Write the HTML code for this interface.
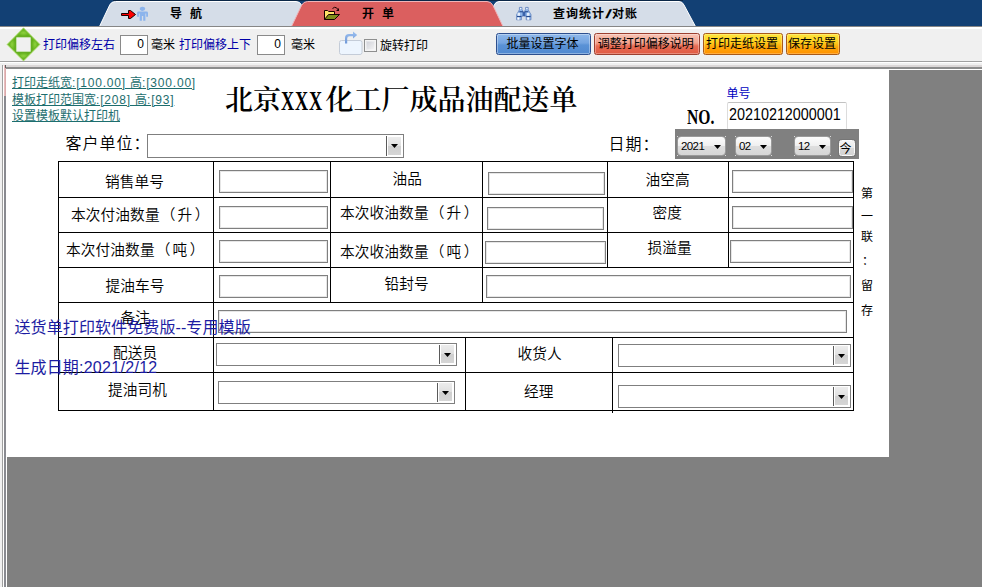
<!DOCTYPE html>
<html lang="zh-CN">
<head>
<meta charset="utf-8">
<title>送货单打印</title>
<style>
html,body{margin:0;padding:0;}
body{width:982px;height:587px;overflow:hidden;position:relative;background:#f0f0f0;
  font-family:"Liberation Sans","Noto Sans CJK SC",sans-serif;font-size:12px;color:#000;}
.abs{position:absolute;}
.t12{position:absolute;font-size:12px;line-height:14px;height:14px;white-space:nowrap;}
/* tab bar */
#tabbar{position:absolute;left:0;top:0;width:982px;height:26px;background:#124074;}
#tabsvg{position:absolute;left:0;top:0;}
.tabtxt{position:absolute;word-spacing:2.7px;letter-spacing:1px;font-weight:bold;font-size:12px;line-height:14px;white-space:nowrap;color:#000;}
/* toolbar */
#toolbar{position:absolute;left:0;top:26px;width:982px;height:35px;background:#f0f0f0;border-top:1px solid #868686;box-sizing:border-box;}
#toolbar:before{content:"";position:absolute;left:0;top:0;width:100%;height:2px;background:#fff;}
.blue{color:#0000a8;}
.tin{position:absolute;box-sizing:border-box;border:1px solid #8a8a8a;background:#fff;font-size:12px;line-height:17px;text-align:right;padding-right:3px;}
.btn{position:absolute;top:33px;height:22px;box-sizing:border-box;border:1px solid #333;border-radius:2.5px;font-size:12px;line-height:20.6px;text-align:center;text-indent:-2px;white-space:nowrap;}
/* paper */
#work{position:absolute;left:7px;top:70px;width:975px;height:517px;background:#808080;}
#paper{position:absolute;left:6px;top:69px;width:883px;height:388px;background:#fff;}
.a{letter-spacing:.8px;}
.link{position:absolute;color:#1d6e6e;text-decoration:underline;font-size:12px;line-height:14px;white-space:nowrap;}
.rp{position:relative;left:2.5px;}
.lp{margin-right:3px;position:relative;left:1px;}
.cl{position:relative;left:0px;}
.lbl{position:absolute;letter-spacing:.12px;font-size:14.67px;line-height:17px;white-space:nowrap;font-weight:350;text-align:center;}
.l16{position:absolute;font-size:16px;line-height:18px;white-space:nowrap;font-weight:350;letter-spacing:1px;}
.inp{position:absolute;box-sizing:border-box;height:23px;border:1px solid #7f7f7f;background:#fff;box-shadow:inset 0 0 0 1px #e6e6e6;}
.cmb{position:absolute;box-sizing:border-box;height:24px;border:1px solid #7f7f7f;background:#fff;}
.cmb i{position:absolute;right:16px;top:1px;bottom:1px;width:1px;background:#5a5a5a;}
.cmb b{position:absolute;right:2px;top:2px;bottom:2px;width:13px;background:linear-gradient(#ececec,#e0e0e0 50%,#cfcfcf 51%,#d6d6d6);}
.cmb b:after{content:"";position:absolute;left:3px;top:7px;width:7px;height:4px;background:#000;clip-path:polygon(0 0,100% 0,50% 100%);}
.cmb.s{height:23px;}
.cmb.s b{top:1px;}
.cmb.s b:after{top:8px;}
.hl{position:absolute;height:1px;background:#000;}
.vl{position:absolute;width:1px;background:#000;}
.wm{position:absolute;letter-spacing:.1px;color:#1c1ca2;font-size:16px;line-height:18px;white-space:nowrap;}
.dsel{position:absolute;top:136px;height:20px;box-sizing:border-box;border:1px solid #9a9a9a;border-radius:4px;background:linear-gradient(#fcfcfc,#f0f0f0 48%,#dedede 52%,#d6d6d6);font-size:11.5px;line-height:19px;padding-left:3px;letter-spacing:-.6px;}
.dsel:before{content:"";position:absolute;left:-1px;top:-1px;right:-1px;bottom:-1px;background:linear-gradient(#dcdcdc,#dcdcdc) 0 0/1px 1px no-repeat,linear-gradient(#dcdcdc,#dcdcdc) 100% 0/1px 1px no-repeat,linear-gradient(#dcdcdc,#dcdcdc) 0 100%/1px 1px no-repeat,linear-gradient(#dcdcdc,#dcdcdc) 100% 100%/1px 1px no-repeat;}
.dsel:after{content:"";position:absolute;right:4px;top:8px;width:7px;height:4px;background:#000;clip-path:polygon(0 0,100% 0,50% 100%);}
</style>
</head>
<body>
<!-- TABBAR -->
<div id="tabbar"></div>
<svg id="tabsvg" width="982" height="27" viewBox="0 0 982 27">
  <rect x="113" y="0" width="570" height="1" fill="#0b2747"/>
  <!-- tab 1 -->
  <path d="M99.5,26.5 L109.8,4.8 Q111.5,1.5 115.5,1.5 L296,1.5 Q300,1.5 301.5,5 L311,26.5 Z" fill="#d5dde8" stroke="#ffffff" stroke-width="1"/>
  <!-- tab 3 -->
  <path d="M484,26.5 L494,5.5 Q495.5,1.5 499,1.5 L679,1.5 Q682.5,1.5 684,5 L695.5,26.5 Z" fill="#d5dde8" stroke="#ffffff" stroke-width="1"/>
  <!-- tab 2 active -->
  <path d="M291.5,26.5 L301.5,5.5 Q303.5,1.5 307.5,1.5 L487,1.5 Q491,1.5 493,5.5 L503,26.5 Z" fill="#db5f5f" stroke="#f0b4b8" stroke-width="1"/>
  <rect x="0" y="26" width="982" height="1" fill="#868686"/>
  <rect x="292" y="26" width="211" height="1" fill="#b48a8a"/>
  <!-- arrow + person icon -->
  <path d="M121.5,13.5 H128.5 V10.5 H130.5 L135.5,14.5 L130.5,18.5 H128.5 V15.5 H121.5 Z" fill="#ff0000" stroke="#1a0000" stroke-width="1" stroke-linejoin="miter"/>
  <g fill="#8cb4ec">
    <ellipse cx="142.5" cy="8.8" rx="2.7" ry="2.1"/>
    <path d="M138.5,11.6 H146.5 Q148,11.6 148,13 V16.7 H146.2 V13.6 H145.4 V20.8 H143.2 V16 H141.9 V20.8 H139.7 V13.6 H138.9 V16.7 H137.1 V13 Q137.1,11.6 138.5,11.6 Z"/>
  </g>
  <!-- folder icon -->
  <g>
    <path d="M324.5,19.5 V10.5 H327.5 L328.5,11.5 H334.5 V14.5" fill="#ffe878" stroke="#1a0000" stroke-width="1"/>
    <path d="M325,11 h2.5 l1,1 h5.5 v3 h-6.5 l-2.5,4 Z" fill="#ffe469"/>
    <path d="M324.5,19.5 L328.5,14.5 H339.5 L334.5,19.5 Z" fill="#7f8c1c" stroke="#1a0000" stroke-width="1" stroke-linejoin="miter"/>
    <path d="M332.5,8.5 Q334.5,6.5 336.5,7.8 L338,9.6" fill="none" stroke="#1a0000" stroke-width="1"/>
    <path d="M339,8 V11 H336 Z" fill="#1a0000"/>
  </g>
  <!-- binoculars icon -->
  <g>
    <path d="M519.4,7.4 h2.6 v2.4 l1.4,1.8 v4.6 h-2 v3.6 h-4.8 v-5.2 l2.8,-4.8 Z" fill="#8fb6ea" stroke="#6483bd" stroke-width="0.8"/>
    <path d="M525.6,7.4 h2.6 v2.4 l2.8,4.8 v5.2 h-4.8 v-3.6 h-2 v-4.6 l1.4,-1.8 Z" fill="#8fb6ea" stroke="#6483bd" stroke-width="0.8"/>
    <rect x="522.6" y="12" width="2.8" height="4" fill="#3b63aa"/>
    <rect x="517" y="15.9" width="4.4" height="1.2" fill="#264a8e"/>
    <rect x="526.2" y="15.9" width="4.4" height="1.2" fill="#264a8e"/>
    <rect x="519.4" y="11.2" width="3.6" height="1.1" fill="#264a8e"/>
    <rect x="524.6" y="11.2" width="3.6" height="1.1" fill="#264a8e"/>
    <rect x="517.4" y="17.4" width="2" height="2.3" fill="#ffffff"/>
    <rect x="527.2" y="17.4" width="2" height="2.3" fill="#ffffff"/>
    <rect x="517.6" y="12.8" width="2.4" height="3" fill="#e4eefb"/>
    <rect x="527" y="12.8" width="2.4" height="3" fill="#e4eefb"/>
    <rect x="520.1" y="8" width="1.2" height="1.2" fill="#ffffff"/>
    <rect x="526.3" y="8" width="1.2" height="1.2" fill="#ffffff"/>
  </g>
</svg>
<div class="tabtxt" style="left:170px;top:7px;">导 航</div>
<div class="tabtxt" style="left:362px;top:7px;">开 单</div>
<div class="tabtxt" style="left:553px;top:7px;">查询统计<span style="display:inline-block;width:7px;text-align:center;letter-spacing:0;transform:scaleX(1.7) skewX(-6deg);">/</span>对账</div>
<!-- TOOLBAR -->
<div id="toolbar"></div>
<!-- diamond icon -->
<svg class="abs" style="left:6px;top:27px" width="36" height="36" viewBox="6 27 36 36">
  <defs>
    <radialGradient id="gd" cx="0.5" cy="0.5" r="0.5"><stop offset="0" stop-color="#8ed23e"/><stop offset="1" stop-color="#64b01c"/></radialGradient>
  </defs>
  <path d="M23.5,27.8 L40,44.4 L23.5,61 L7,44.4 Z" fill="#70ba26" stroke="#b6e27c" stroke-width="0.8"/>
  <path d="M23.5,29.6 L29.8,36 H17.2 Z" fill="url(#gd)"/>
  <path d="M23.5,59.2 L29.8,52.8 H17.2 Z" fill="url(#gd)"/>
  <path d="M8.8,44.4 L15.2,38 V50.8 Z" fill="url(#gd)"/>
  <path d="M38.2,44.4 L31.8,38 V50.8 Z" fill="url(#gd)"/>
  <rect x="15.6" y="36.6" width="15.8" height="15.8" fill="#58a01e"/>
  <rect x="16.3" y="37.3" width="14.4" height="14.4" fill="#f4faea"/>
  <rect x="17" y="38" width="13" height="13" fill="#f0f0f0"/>
</svg>
<div class="t12 blue" style="left:43px;top:38px;">打印偏移左右</div>
<div class="tin" style="left:120px;top:35px;width:28px;height:20px;">0</div>
<div class="t12" style="left:151px;top:38px;">毫米</div>
<div class="t12 blue" style="left:179px;top:38px;">打印偏移上下</div>
<div class="tin" style="left:257px;top:35px;width:28px;height:20px;">0</div>
<div class="t12" style="left:291px;top:38px;">毫米</div>
<!-- rotate icon -->
<svg class="abs" style="left:337px;top:29px" width="28" height="28" viewBox="337 29 28 28">
  <defs><linearGradient id="ga" x1="0" y1="0" x2="0" y2="1"><stop offset="0" stop-color="#9cc0f0"/><stop offset="1" stop-color="#6f98d8"/></linearGradient></defs>
  <rect x="339.5" y="40.5" width="22.5" height="14" rx="2" ry="2" fill="#edf5fe" stroke="#c4ccd8" stroke-width="1"/>
  <path d="M345,43.5 V38 Q345,34 349,34 H353 V31.5 L357.2,35 L353,38.6 V36.2 H349.5 Q347.2,36.2 347.2,38.5 V43.5 Z" fill="url(#ga)"/>
</svg>
<!-- checkbox -->
<div class="abs" style="left:364px;top:39px;width:13px;height:13px;box-sizing:border-box;border:1px solid #8e8f8f;background:#f4f4f4;">
  <div style="position:absolute;left:1px;top:1px;width:9px;height:9px;background:linear-gradient(135deg,#cfd1d8,#f4f4f4);box-shadow:inset 0 0 0 1px rgba(255,255,255,.35);"></div>
</div>
<div class="t12" style="left:380px;top:39px;">旋转打印</div>
<!-- buttons -->
<div class="btn" style="left:496px;width:95px;border-color:#2d4f8e;background:linear-gradient(#8fb8ea,#74a4e0 45%,#5a92d6 55%,#5189d0);box-shadow:inset 0 0 0 1px rgba(255,255,255,.35);">批量设置字体</div>
<div class="btn" style="left:594px;width:105.5px;border-color:#9c4030;background:linear-gradient(#f8c4b4,#f2a28e 45%,#e86c54 60%,#e05a42);box-shadow:inset 0 0 0 1px rgba(255,255,255,.3);">调整打印偏移说明</div>
<div class="btn" style="left:703px;width:80px;border-color:#a85a18;background:linear-gradient(#ffe63c,#ffd020 40%,#ffa808 65%,#ff9000);box-shadow:inset 0 0 0 1px rgba(255,255,255,.25);">打印走纸设置</div>
<div class="btn" style="left:786px;width:54px;border-color:#a85a18;background:linear-gradient(#ffe63c,#ffd020 40%,#ffa808 65%,#ff9000);box-shadow:inset 0 0 0 1px rgba(255,255,255,.25);">保存设置</div>
<!-- separators under toolbar -->
<div class="abs" style="left:0;top:61px;width:982px;height:1px;background:#a0a0a0;"></div>
<div class="abs" style="left:0;top:62px;width:982px;height:1px;background:#ffffff;"></div>
<div class="abs" style="left:0;top:63px;width:982px;height:2px;background:#f0f0f0;"></div>
<div class="abs" style="left:6px;top:65px;width:976px;height:2px;background:#dcd8d8;"></div>
<div class="abs" style="left:6px;top:67px;width:976px;height:2px;background:#8c8c8c;"></div>
<div class="abs" style="left:6px;top:69px;width:976px;height:1px;background:#ffffff;"></div>
<!-- left edge -->
<div class="abs" style="left:2px;top:65px;width:1px;height:522px;background:#a0a0a0;"></div>
<div class="abs" style="left:3px;top:66px;width:1px;height:521px;background:#ffffff;"></div>
<div class="abs" style="left:4px;top:65px;width:2px;height:522px;background:#898a90;"></div>
<div class="abs" style="left:6px;top:69px;width:1px;height:518px;background:#ffffff;"></div>
<div class="abs" style="left:4px;top:65px;width:2px;height:31px;background:linear-gradient(90deg,#ecc8c8,#d6a0a2);"></div>
<div class="abs" style="left:5px;top:65px;width:1px;height:3px;background:#5e5e5e;"></div>
<!-- WORK -->
<div id="work"></div>
<div id="paper"></div>
<div class="link" style="left:12px;top:76px;">打印走纸宽<span class="a">:[100.00] </span>高<span class="a">:[300.00]</span></div>
<div class="link" style="left:12px;top:92.5px;">模板打印范围宽<span class="a">:[208] </span>高<span class="a">:[93]</span></div>
<div class="link" style="left:12px;top:109px;">设置模板默认打印机</div>
<div class="abs" id="title" style="left:225px;top:82.5px;font:600 28px/36px 'Liberation Serif','Noto Serif CJK SC',serif;white-space:nowrap;">北京<span style="display:inline-block;width:44.5px;"><span style="display:inline-block;transform:scaleX(.65);transform-origin:0 50%;font-weight:bold;letter-spacing:1.3px;margin-left:-.2px;">XXX</span></span>化工厂成品油配送单</div>
<div class="l16" style="left:65.5px;top:135px;">客户单位<span class="cl">：</span></div>
<div class="cmb" style="left:147px;top:134px;width:257px;"><i></i><b></b></div>
<div class="t12" style="left:726.5px;top:87px;color:#0000c0;">单号</div>
<div class="abs" style="left:687px;top:105px;font:bold 20px/24px 'Liberation Serif',serif;white-space:nowrap;transform:scaleX(.78);transform-origin:0 50%;">NO.</div>
<div class="abs" style="left:727px;top:102px;width:120px;height:28px;box-sizing:border-box;border:1px solid #dcdcdc;border-top-color:#c2c2c2;border-radius:2px;background:#fff;font-size:16px;line-height:24px;padding-left:1px;"><span style="display:inline-block;transform:scaleX(.897);transform-origin:0 50%;">20210212000001</span></div>
<div class="l16" style="left:608.5px;top:136px;">日期<span class="cl">：</span></div>
<div class="abs" style="left:675px;top:129px;width:184px;height:30px;background:#808080;"></div>
<div class="dsel" style="left:677px;width:49px;">2021</div>
<div class="dsel" style="left:735px;width:37px;">02</div>
<div class="dsel" style="left:794px;width:37px;">12</div>
<div class="abs" style="left:839px;top:140px;width:16px;height:16px;box-sizing:border-box;border:1px solid #fafafa;border-radius:2.5px;box-shadow:0 0 0 1px #767676;background:linear-gradient(#f4f4f4,#eaeaea 48%,#dadada 52%,#d4d4d4);font-size:12px;line-height:14px;text-align:center;text-indent:-1px;overflow:visible;white-space:nowrap;"><span style="position:relative;left:-1px;top:1px;">今</span></div>
<div class="hl" style="left:58px;top:161px;width:796px;"></div>
<div class="hl" style="left:58px;top:197px;width:796px;"></div>
<div class="hl" style="left:58px;top:232px;width:796px;"></div>
<div class="hl" style="left:58px;top:267px;width:796px;"></div>
<div class="hl" style="left:58px;top:302px;width:796px;"></div>
<div class="hl" style="left:58px;top:337px;width:796px;"></div>
<div class="hl" style="left:58px;top:372px;width:796px;"></div>
<div class="hl" style="left:58px;top:410px;width:796px;"></div>
<div class="vl" style="left:58px;top:161px;height:250px;"></div>
<div class="vl" style="left:213px;top:161px;height:250px;"></div>
<div class="vl" style="left:853px;top:161px;height:250px;"></div>
<div class="vl" style="left:330px;top:161px;height:142px;"></div>
<div class="vl" style="left:482px;top:161px;height:142px;"></div>
<div class="vl" style="left:607px;top:161px;height:107px;"></div>
<div class="vl" style="left:728px;top:161px;height:107px;"></div>
<div class="vl" style="left:465px;top:337px;height:74px;"></div>
<div class="vl" style="left:612px;top:337px;height:76px;"></div>
<div class="lbl" style="left:105px;top:174px;">销售单号</div>
<div class="lbl" style="left:71px;top:206.5px;">本次付油数量<span class="lp">（</span>升<span class="rp">）</span></div>
<div class="lbl" style="left:66px;top:241.5px;">本次付油数量<span class="lp">（</span>吨<span class="rp">）</span></div>
<div class="lbl" style="left:105.5px;top:277.5px;">提油车号</div>
<div class="lbl" style="left:120.5px;top:309.5px;">备注</div>
<div class="lbl" style="left:113px;top:344.5px;">配送员</div>
<div class="lbl" style="left:108px;top:381.5px;">提油司机</div>
<div class="lbl" style="left:392.5px;top:170.5px;">油品</div>
<div class="lbl" style="left:340px;top:205px;">本次收油数量<span class="lp">（</span>升<span class="rp">）</span></div>
<div class="lbl" style="left:340px;top:243.5px;">本次收油数量<span class="lp">（</span>吨<span class="rp">）</span></div>
<div class="lbl" style="left:384.5px;top:276px;">铅封号</div>
<div class="lbl" style="left:645.5px;top:171.5px;">油空高</div>
<div class="lbl" style="left:652.5px;top:205px;">密度</div>
<div class="lbl" style="left:647.5px;top:240px;">损溢量</div>
<div class="lbl" style="left:517.5px;top:345.5px;">收货人</div>
<div class="lbl" style="left:524px;top:383.5px;">经理</div>
<div class="inp" style="left:219px;top:170px;width:109px;"></div>
<div class="inp" style="left:219px;top:206px;width:109px;"></div>
<div class="inp" style="left:219px;top:240px;width:109px;"></div>
<div class="inp" style="left:219px;top:275px;width:109px;"></div>
<div class="inp" style="left:488px;top:172px;width:117px;"></div>
<div class="inp" style="left:487px;top:207px;width:117px;"></div>
<div class="inp" style="left:485px;top:241px;width:121px;"></div>
<div class="inp" style="left:486px;top:275px;width:365px;"></div>
<div class="inp" style="left:218px;top:310px;width:629px;"></div>
<div class="inp" style="left:732px;top:170px;width:121px;"></div>
<div class="inp" style="left:732px;top:206px;width:121px;"></div>
<div class="inp" style="left:730px;top:240px;width:121px;"></div>
<div class="cmb s" style="left:216px;top:343px;width:241px;"><i></i><b></b></div>
<div class="cmb s" style="left:218px;top:381px;width:237px;"><i></i><b></b></div>
<div class="cmb s" style="left:618px;top:344px;width:233px;"><i></i><b></b></div>
<div class="cmb s" style="left:618px;top:385px;width:233px;"><i></i><b></b></div>
<div class="t12" style="left:861px;top:187px;">第</div>
<div class="t12" style="left:861px;top:209.5px;">一</div>
<div class="t12" style="left:861px;top:230px;">联</div>
<div class="t12" style="left:862px;top:254px;">：</div>
<div class="t12" style="left:861px;top:278.5px;">留</div>
<div class="t12" style="left:861px;top:304px;">存</div>
<div class="wm" style="left:14.5px;top:319px;">送货单打印软件免费版--专用模版</div>
<div class="wm" style="left:14.5px;top:359px;">生成日期<span style="letter-spacing:.3px">:2021/2/12</span></div>
</body>
</html>
